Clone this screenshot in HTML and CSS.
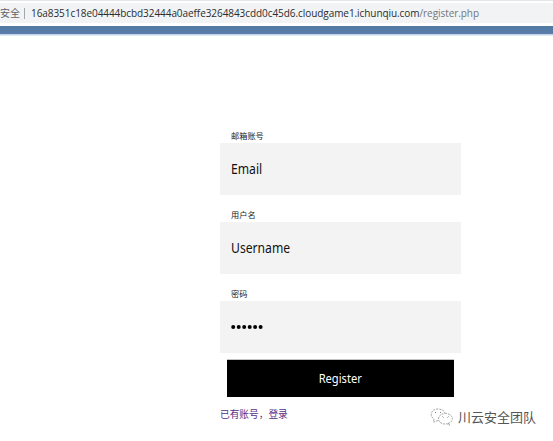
FILE: index.html
```html
<!DOCTYPE html>
<html lang="zh-CN">
<head>
<meta charset="utf-8">
<title>Register</title>
<link rel="stylesheet" href="styles.css">
</head>
<body>
<header class="browser">
  <div class="address">
    <span class="security">安全</span>
    <span class="divider"></span>
    <span class="url">16a8351c18e04444bcbd32444a0aeffe3264843cdd0c45d6.cloudgame1.ichunqiu.com<span class="path">/register.php</span></span>
  </div>
</header>
<div class="band"></div>
<main class="form">
  <div class="field"><div class="label">邮箱账号</div><div class="input"><span class="value">Email</span></div></div>
  <div class="field"><div class="label">用户名</div><div class="input"><span class="value">Username</span></div></div>
  <div class="field"><div class="label">密码</div><div class="input"><svg class="dots" width="33" height="6" viewBox="0 0 33 6"><circle cx="2.2" cy="3" r="2"/><circle cx="7.7" cy="3" r="2"/><circle cx="13.2" cy="3" r="2"/><circle cx="18.7" cy="3" r="2"/><circle cx="24.1" cy="3" r="2"/><circle cx="29.6" cy="3" r="2"/></svg></div></div>
  <div class="button"><span class="caption">Register</span></div>
  <a class="login">已有账号，登录</a>
</main>
<div class="watermark">
  <svg class="chat" width="24" height="19" viewBox="0 0 24 19" fill="none" stroke="#8c8c8c" stroke-width=".8" stroke-dasharray="2 1">
    <path d="M8 12.5 3.5 14 4 11C-1 8 1 1 8 1c4 0 6.500 2 7 4"/>
    <path d="M18 15.500c7-2 5-10-2.500-10S6 13 12 15.500c2 .8 4 .5 5 .2l3 1.500z"/>
    <path d="M5 4.500h1M10 4.500h1M12.500 8.500l1 1M17.500 9.500l1-1" stroke="#555"/>
  </svg>
  <span>川云安全团队</span>
</div>
</body>
</html>
```
FILE: styles.css
```css
* { box-sizing: border-box; }
body {
  margin: 0;
  width: 553px;
  height: 441px;
  overflow: hidden;
  background: #fff;
  color: #111;
  font-family: "Noto Sans", "Noto Sans CJK SC", sans-serif;
}
.browser { height: 26px; padding-top: 3px; background: linear-gradient(#e4e5e7 0 1px, #fff 1px 3px, #fff 3px); }
.address {
  display: flex;
  align-items: center;
  height: 20px;
  background: #f1f3f4;
  font-family: "Open Sans", "Noto Sans CJK SC", sans-serif;
  font-size: 10px;
  line-height: 20px;
  white-space: nowrap;
}
.security { width: 19px; color: #5f6368; }
.divider { width: 1px; height: 11px; margin: 0 6px 0 5px; background: #a5a8ab; }
.url { color: #2b2d30; letter-spacing: -.066px; }
.path { color: #73777b; }
.band { height: 10px; background: linear-gradient(#527ba1 0, #5b7bad 8px, #b9cbe3 8px, #e9f2fa 10px); }
.form { width: 241px; margin: 94px 0 0 220px; }
.field { height: 79px; }
.label { height: 13px; padding-left: 11px; color: #222; font-size: 8.200px; line-height: 12px; }
.input { display: flex; align-items: center; height: 52px; padding-left: 11px; background: #f3f3f3; font-size: 13.500px; }
.value { display: inline-block; transform: scaleX(.9); transform-origin: left; }
.dots { display: block; fill: #000; }
.button {
  display: flex;
  align-items: center;
  justify-content: center;
  width: 227px;
  height: 38px;
  margin: -8px 0 0 7px;
  border-top: 1px solid #c4c4c4;
  background: #000;
  color: #fff;
  font-size: 12px;
}
.caption { display: inline-block; transform: scaleX(.93); }
.login { display: block; margin-top: 10px; color: #562f87; font-size: 9.700px; line-height: 16px; }
.watermark {
  position: absolute;
  left: 430px;
  top: 407px;
  display: flex;
  align-items: center;
  gap: 4px;
  height: 20px;
  color: #555;
  font-size: 13px;
  line-height: 20px;
  white-space: nowrap;
}
```
